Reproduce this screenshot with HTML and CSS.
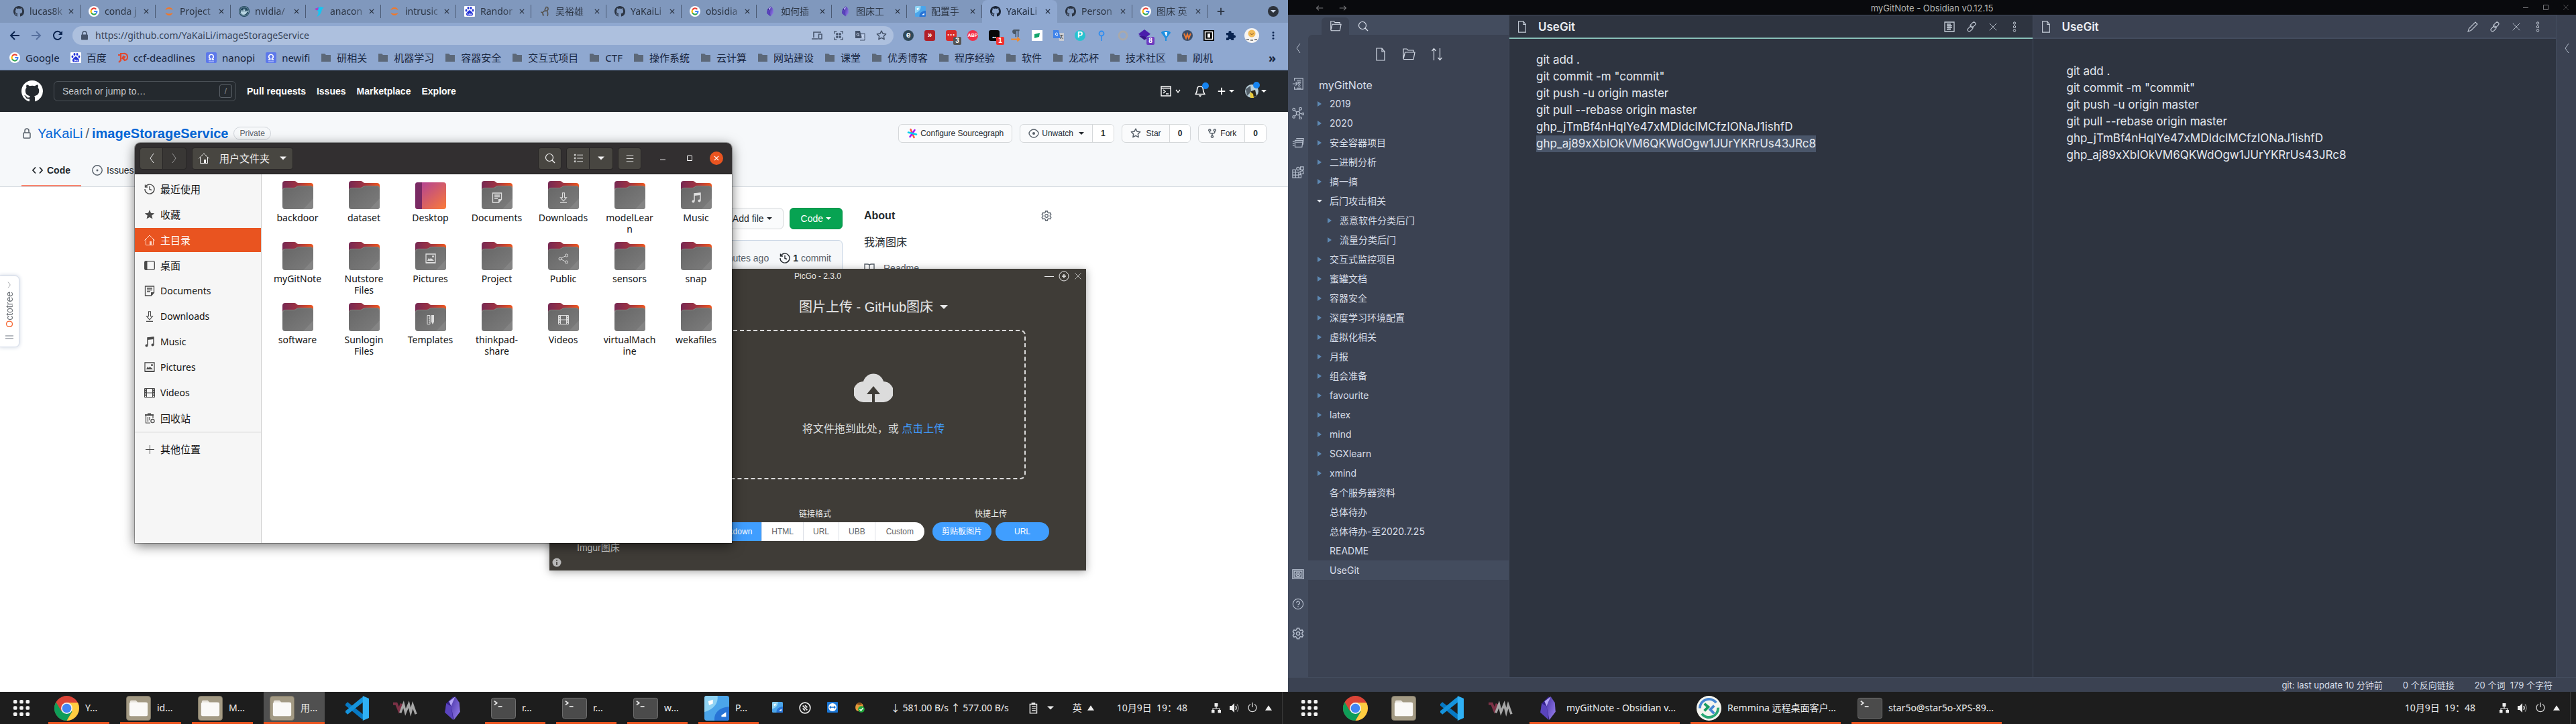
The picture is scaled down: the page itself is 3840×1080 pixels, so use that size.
FILE: index.html
```
<!DOCTYPE html>
<html lang="zh-CN">
<head>
<meta charset="utf-8">
<title>Desktop</title>
<link rel="stylesheet" href="styles.css">
</head>
<body>
<svg class="sprite" aria-hidden="true">
<defs>
<linearGradient id="gBack" x1="0" x2="1"><stop offset="0" stop-color="#772953"/><stop offset=".45" stop-color="#9b3344"/><stop offset="1" stop-color="#f0571f"/></linearGradient>
<linearGradient id="gFront" x1="0" y1="0" x2="1" y2="1"><stop offset="0" stop-color="#666"/><stop offset="1" stop-color="#7d7d7d"/></linearGradient>
<linearGradient id="gDesk" x1="0" x2="1" y2="1"><stop offset="0" stop-color="#ab3d9c"/><stop offset="1" stop-color="#fb7b38"/></linearGradient>
<linearGradient id="gObs" x1="0" x2="1" y2="1"><stop offset="0" stop-color="#4a35a8"/><stop offset="1" stop-color="#9a82f0"/></linearGradient>
</defs>
<symbol id="github" viewBox="0 0 16 16"><path fill="currentColor" d="M8 0C3.58 0 0 3.58 0 8c0 3.54 2.29 6.53 5.47 7.59.4.07.55-.17.55-.38 0-.19-.01-.82-.01-1.49-2.01.37-2.53-.49-2.69-.94-.09-.23-.48-.94-.82-1.13-.28-.15-.68-.52-.01-.53.63-.01 1.08.58 1.23.82.72 1.21 1.87.87 2.33.66.07-.52.28-.87.51-1.07-1.78-.2-3.64-.89-3.64-3.95 0-.87.31-1.59.82-2.15-.08-.2-.36-1.02.08-2.12 0 0 .67-.21 2.2.82.64-.18 1.32-.27 2-.27.68 0 1.36.09 2 .27 1.53-1.04 2.2-.82 2.2-.82.44 1.1.16 1.92.08 2.12.51.56.82 1.27.82 2.15 0 3.07-1.87 3.75-3.65 3.95.29.25.54.73.54 1.48 0 1.07-.01 1.93-.01 2.2 0 .21.15.46.55.38A8.013 8.013 0 0016 8c0-4.42-3.58-8-8-8z"/></symbol>
<symbol id="google" viewBox="0 0 16 16"><circle cx="8" cy="8" r="8" fill="#fff"/><g fill="none" stroke-width="2.2"><path d="M11.4 4.9A4.4 4.4 0 0 0 4.2 5.7" stroke="#ea4335"/><path d="M4.2 5.7a4.4 4.4 0 0 0 0 4.6" stroke="#fbbc05"/><path d="M4.2 10.3a4.4 4.4 0 0 0 6.8 1.1" stroke="#34a853"/><path d="M11 11.4A4.4 4.4 0 0 0 12.4 8H8.2" stroke="#4285f4"/></g></symbol>
<symbol id="jupyter" viewBox="0 0 16 16"><path fill="#f37726" d="M2.4 6.2C3.2 3.6 5.300 2 8 2s4.800 1.600 5.600 4.200C12.200 5 10.200 4.500 8 4.500S3.800 5 2.400 6.200zM2.400 9.800C3.800 11 5.800 11.500 8 11.500s4.200-.5 5.600-1.700C12.800 12.400 10.700 14 8 14s-4.800-1.600-5.600-4.200z"/></symbol>
<symbol id="docker" viewBox="0 0 16 16"><circle cx="8" cy="8" r="8" fill="#23485e"/><circle cx="8" cy="8" r="6.500" fill="none" stroke="#8fb0c0" stroke-width=".8"/><path fill="#b9d5e2" d="M2.800 8h8.200c.6 0 .9-1 .7-1.800.8.4 1 1 .9 1.500.5-.1 1 0 1.300.2-.3.700-.9 1-1.700 1C11.200 11.700 9.500 13 7 13c-2.600 0-4.300-1.700-4.200-5zM4 6h1.500v1.500H4zM6 6h1.500v1.500H6zM8 6h1.500v1.500H8zM6 4h1.500v1.500H6zM8 4h1.500v1.500H8z"/></symbol>
<symbol id="hummer" viewBox="0 0 16 16"><path fill="#18c4f0" d="M1 4l5-2c3-1.500 6-1 9 1-2 0-3 2-3.500 4C10.500 11 9 14 4 16c2-3 3-5 2.500-8z"/><path fill="#b03ec4" d="M1 4l6-2-1 4c-2 1-3 0-5-2z"/></symbol>
<symbol id="baidu" viewBox="0 0 16 16"><rect width="16" height="16" rx="1" fill="#fff"/><g fill="#2433d8"><ellipse cx="3" cy="6.500" rx="1.400" ry="2"/><ellipse cx="6" cy="3" rx="1.500" ry="2.100"/><ellipse cx="10" cy="3" rx="1.500" ry="2.100"/><ellipse cx="13" cy="6.500" rx="1.400" ry="2"/><path d="M8 6.200c1.400 0 2 1.500 3.300 2.600C13.800 11 13.400 14.600 10.600 14.600H5.400C2.600 14.600 2.200 11 4.700 8.800 6 7.700 6.600 6.200 8 6.200z"/></g><path d="M5.500 10v3h2V11M9 11v2h2v-2" stroke="#fff" fill="none" stroke-width=".8"/></symbol>
<symbol id="blogs" viewBox="0 0 16 16"><path d="M2 9c3 0 4 2 3 5M7 14c-4-3-1-8 2-6M9 2c5-2 5 4 2 5s-4-2-1-4M11 7c2 2 2 5 1 8" stroke="#55534f" stroke-width="1.600" fill="none"/></symbol>
<symbol id="obsidian" viewBox="0 0 24 36"><path fill="#34208c" d="M3 11L13 1l3 3-3 30L1 24z"/><path fill="#5a44bd" d="M3 11l7 4 3 20L1 24z"/><path fill="url(#gObs)" d="M16 1l6 9 1 13-9 12-4-20z"/><path fill="#b3a4f5" d="M16 1l-6 14-3-7z"/></symbol>
<symbol id="picgo" viewBox="0 0 32 32"><rect width="32" height="32" rx="3" fill="#4ba5ea"/><path fill="#8fd3f4" d="M3 0h14c1 9-4 17-17 21V3a3 3 0 0 1 3-3z"/><path fill="#2874d6" d="M32 14v15a3 3 0 0 1-3 3H13c-1-10 6-17 19-18z"/><path fill="#fff" d="M5 7l6-2v5l-5 2zM22 25l6-4v6h-6z"/></symbol>
<symbol id="x" viewBox="0 0 16 16"><path d="M3 3l10 10M13 3L3 13" stroke="currentColor" stroke-width="2" fill="none"/></symbol>
<symbol id="xthin" viewBox="0 0 16 16"><path d="M2 2l12 12M14 2L2 14" stroke="currentColor" fill="none"/></symbol>
<symbol id="plus" viewBox="0 0 16 16"><path d="M8 2v12M2 8h12" stroke="currentColor" stroke-width="2" fill="none"/></symbol>
<symbol id="plusthin" viewBox="0 0 16 16"><path d="M8.500 2v13M2 8.500h13" stroke="currentColor" fill="none"/></symbol>
<symbol id="back" viewBox="0 0 16 16"><path d="M15 8H2.500M8 2L2 8l6 6" stroke="currentColor" stroke-width="2" fill="none"/></symbol>
<symbol id="fwd" viewBox="0 0 16 16"><path d="M1 8h12.500M8 2l6 6-6 6" stroke="currentColor" stroke-width="2" fill="none"/></symbol>
<symbol id="backthin" viewBox="0 0 16 16"><path d="M15 8H2M6.500 3.500L2 8l4.500 4.500" stroke="currentColor" fill="none" stroke-width="1.500"/></symbol>
<symbol id="fwdthin" viewBox="0 0 16 16"><path d="M1 8h13M9.500 3.500L14 8l-4.500 4.500" stroke="currentColor" fill="none" stroke-width="1.500"/></symbol>
<symbol id="reload" viewBox="0 0 16 16"><path d="M13.300 10.500A6 6 0 1 1 12.500 4" stroke="currentColor" stroke-width="2" fill="none"/><path fill="currentColor" d="M15 1v6H9z"/></symbol>
<symbol id="lockfill" viewBox="0 0 16 16"><rect x="3" y="6.500" width="10" height="8" rx="1" fill="currentColor"/><path d="M5.200 7V4.500a2.800 2.800 0 0 1 5.600 0V7" fill="none" stroke="currentColor" stroke-width="1.600"/></symbol>
<symbol id="lock" viewBox="0 0 16 16"><rect x="3" y="7" width="10" height="8" rx="1" fill="none" stroke="currentColor" stroke-width="1.500"/><path d="M5 7V4a3 3 0 0 1 6 0v3" fill="none" stroke="currentColor" stroke-width="1.500"/></symbol>
<symbol id="devices" viewBox="0 0 16 16"><path d="M14 3H3v8M0 13h9" stroke="currentColor" stroke-width="1.600" fill="none"/><rect x="10.500" y="6" width="4.500" height="7" fill="none" stroke="currentColor" stroke-width="1.500"/></symbol>
<symbol id="qr" viewBox="0 0 16 16"><g fill="none" stroke="currentColor" stroke-width="1.500"><path d="M1 5V1h4M11 1h4v4M15 11v4h-4M5 15H1v-4"/><path d="M4 4h3v3H4zM9 4h3v3H9zM4 9h3v3H4zM9 9h3v3H9z" fill="currentColor" stroke-width=".5"/></g></symbol>
<symbol id="translate" viewBox="0 0 16 16"><path d="M7 5h8v10H8" fill="none" stroke="currentColor"/><path fill="currentColor" d="M1 1h7l3 11H1z"/><path d="M6.500 5A2 2 0 1 0 7 7H5.200M10 8h4M12 7v1c0 2-1 3-2 4M11 9l3 3.500" stroke="#cfdaf0" fill="none" stroke-width=".9"/></symbol>
<symbol id="staro" viewBox="0 0 16 16"><path fill="currentColor" d="M8 .25a.75.75 0 01.673.418l1.882 3.815 4.210.612a.75.75 0 01.416 1.279l-3.046 2.970.719 4.192a.75.75 0 01-1.088.791L8 12.347l-3.766 1.980a.75.75 0 01-1.088-.79l.72-4.194L.818 6.374a.75.75 0 01.416-1.280l4.210-.611L7.327.668A.75.75 0 018 .25zm0 2.445L6.615 5.500a.75.75 0 01-.564.41l-3.097.45 2.240 2.184a.75.75 0 01.216.664l-.528 3.084 2.769-1.456a.75.75 0 01.698 0l2.770 1.456-.53-3.084a.75.75 0 01.216-.664l2.240-2.183-3.096-.45a.75.75 0 01-.564-.41L8 2.694v.001z"/></symbol>
<symbol id="starf" viewBox="0 0 16 16"><path fill="currentColor" d="M8 1l2 4.800 5.200.4-4 3.400 1.300 5L8 11.900l-4.500 2.700 1.300-5-4-3.400L6 5.800z"/></symbol>
<symbol id="fork" viewBox="0 0 16 16"><path fill="currentColor" fill-rule="evenodd" d="M5 3.250a.75.75 0 11-1.500 0 .75.75 0 011.500 0zm0 2.122a2.250 2.250 0 10-1.500 0v.878A2.250 2.250 0 005.750 8.500h1.500v2.128a2.251 2.251 0 101.500 0V8.500h1.500a2.250 2.250 0 002.250-2.250v-.878a2.250 2.250 0 10-1.500 0v.878a.75.75 0 01-.75.75h-4.500A.75.75 0 015 6.250v-.878zm3.750 7.378a.75.75 0 11-1.500 0 .75.75 0 011.500 0zm3-8.750a.75.75 0 100-1.500.75.75 0 000 1.500z"/></symbol>
<symbol id="folderbm" viewBox="0 0 16 16"><path fill="#5c6878" d="M1 2h5l2 2h7v10H1z"/></symbol>
<symbol id="ccf" viewBox="0 0 16 16"><path d="M1 4h4v8l-3 3M4 2h5a5 5 0 0 1 2 10l-2-2 2-3-2-1-2 4" fill="none" stroke="#e0492f" stroke-width="2.200"/></symbol>
<symbol id="omega" viewBox="0 0 16 16"><rect width="16" height="16" rx="2" fill="#5d78ea"/><path d="M4 11h2.500V9.500a3.300 3.300 0 1 1 3 0V11H12" fill="none" stroke="#fff" stroke-width="1.700"/><path d="M4 14h8" stroke="#c9d3ff" stroke-width="1"/></symbol>
<symbol id="puzzle" viewBox="0 0 16 16"><path fill="currentColor" d="M2 4h3.500a2.200 2.200 0 1 1 4 0H13v3.500a2.200 2.200 0 1 1 0 4V15H9.500a2 2 0 1 0-4 0H2v-4a2 2 0 1 0 0-3.500z"/></symbol>
<symbol id="dots" viewBox="0 0 16 16"><g fill="currentColor"><circle cx="8" cy="3" r="1.700"/><circle cx="8" cy="8" r="1.700"/><circle cx="8" cy="13" r="1.700"/></g></symbol>
<symbol id="odots" viewBox="0 0 16 16"><g fill="none" stroke="currentColor"><circle cx="8" cy="2.500" r="1.700"/><circle cx="8" cy="8" r="1.700"/><circle cx="8" cy="13.500" r="1.700"/></g></symbol>
<symbol id="caret" viewBox="0 0 8 8"><path fill="currentColor" d="M0 2h8L4 6z"/></symbol>
<symbol id="caretup" viewBox="0 0 8 8"><path fill="currentColor" d="M0 7h8L4 1z"/></symbol>
<symbol id="caretright" viewBox="0 0 8 8"><path fill="currentColor" d="M1 0l6 4-6 4z"/></symbol>
<symbol id="chevl" viewBox="0 0 8 16"><path d="M7 1L2 8l5 7" stroke="currentColor" fill="none"/></symbol>
<symbol id="chevr" viewBox="0 0 8 16"><path d="M1 1l5 7-5 7" stroke="currentColor" fill="none"/></symbol>
<symbol id="chevd" viewBox="0 0 8 8"><path d="M1 2l3 4 3-4" stroke="currentColor" fill="none" stroke-width="1.300"/></symbol>
<symbol id="term" viewBox="0 0 16 16"><path fill="none" stroke="currentColor" stroke-width="1.400" d="M1 1h14v14H1zM1 3.500h14M4 6l3 2.500L4 11M8 12h4"/></symbol>
<symbol id="bell" viewBox="0 0 16 16"><path fill="none" stroke="currentColor" stroke-width="1.400" d="M8 1.500C5 1.500 4 4 4 6c0 3-1 4-2 6h12c-1-2-2-3-2-6 0-2-1-4.500-4-4.500z"/><path d="M6 13.500h4L8 15.800z" fill="currentColor"/></symbol>
<symbol id="code" viewBox="0 0 16 16"><path fill="none" stroke="currentColor" stroke-width="1.700" d="M5 3.500L1 8l4 4.500M11 3.500L15 8l-4 4.500"/></symbol>
<symbol id="issue" viewBox="0 0 16 16"><circle cx="8" cy="8" r="7.200" fill="none" stroke="currentColor" stroke-width="1.400"/><circle cx="8" cy="8" r="1.500" fill="currentColor"/></symbol>
<symbol id="eye" viewBox="0 0 16 16"><path fill="none" stroke="currentColor" stroke-width="1.400" d="M8 2c3.500 0 7 3.500 7 6s-3.500 6-7 6-7-3.500-7-6 3.500-6 7-6z"/><circle cx="8" cy="8" r="2" fill="currentColor"/></symbol>
<symbol id="sg" viewBox="0 0 16 16"><g stroke-width="2.600" stroke-linecap="round"><path d="M5.500 2l5 12" stroke="#ff5543"/><path d="M11.500 3l-7 10" stroke="#a112ff"/><path d="M2 6.500l12 3" stroke="#00cbec"/></g></symbol>
<symbol id="gear" viewBox="0 0 16 16"><path fill="none" stroke="currentColor" stroke-width="1.300" d="M6.600 1h2.800l.5 2 1.500.9 2-.6 1.400 2.400L13.300 7.200v1.600l1.500 1.500-1.400 2.400-2-.6-1.500.9-.5 2H6.600l-.5-2-1.500-.9-2 .6-1.400-2.400 1.500-1.500V7.200L1.200 5.700l1.400-2.400 2 .6L6.100 3z"/><circle cx="8" cy="8" r="2.300" fill="none" stroke="currentColor" stroke-width="1.300"/></symbol>
<symbol id="history" viewBox="0 0 16 16"><path fill="none" stroke="currentColor" stroke-width="1.400" d="M2 4.500A7 7 0 1 1 1 8M1.500 1.500v3.500H5M8 4v4.500l3 1"/></symbol>
<symbol id="book" viewBox="0 0 16 16"><path fill="none" stroke="currentColor" stroke-width="1.400" d="M8 4c0-1 1-2 3-2h4v10h-4c-2 0-3 1-3 2 0-1-1-2-3-2H1V2h4c2 0 3 1 3 2zM8 4v10"/></symbol>
<symbol id="home" viewBox="0 0 16 16"><path fill="none" stroke="currentColor" d="M.5 8.500L8 1l7.500 7.500M2.500 7v8.500h11V7"/><path fill="currentColor" d="M8 10h3v5.500H8z"/></symbol>
<symbol id="desk" viewBox="0 0 16 16"><rect x=".7" y="1.700" width="14.600" height="12.600" rx="1.500" fill="none" stroke="currentColor" stroke-width="1.300"/><path fill="currentColor" d="M1 2h3.500v12H1z"/></symbol>
<symbol id="doc" viewBox="0 0 16 16"><path fill="none" stroke="currentColor" stroke-width="1.300" d="M1.500 1h13v9.500L10.500 15h-9zM4 4h8M4 6.500h8M4 9h5"/><path fill="currentColor" d="M10 10h5l-5 5z"/></symbol>
<symbol id="down" viewBox="0 0 16 16"><path fill="none" stroke="currentColor" stroke-width="1.100" d="M6.500.7h3v7h3L8 13 3.500 7.700h3zM3 15.400h10"/></symbol>
<symbol id="music" viewBox="0 0 16 16"><path fill="none" stroke="currentColor" stroke-width="1.500" d="M5 13V2l9-1v11"/><path fill="currentColor" d="M5 1.500l9-1V4L5 5z"/><circle cx="3.500" cy="13.500" r="2" fill="currentColor"/><circle cx="12.500" cy="12.500" r="2" fill="currentColor"/></symbol>
<symbol id="pic" viewBox="0 0 16 16"><path fill="none" stroke="currentColor" stroke-width="1.300" d="M1 1h14v13H1z"/><path fill="currentColor" d="M1 13h14v2H1zM3 11l2-4 2 2 1-2 3 2 2 2z"/><circle cx="11.500" cy="4.500" r="1.500" fill="currentColor"/></symbol>
<symbol id="video" viewBox="0 0 16 16"><path fill="none" stroke="currentColor" d="M.5 1.500h15v13H.5zM3.500 1.500v13M12.500 1.500v13M3.500 8h9"/><path stroke="currentColor" stroke-width="2" stroke-dasharray="1.500 1" d="M2 1.500v13M14 1.500v13"/></symbol>
<symbol id="trash" viewBox="0 0 16 16"><path fill="currentColor" d="M1 2h4V.5h5V2h4v2H1z"/><path fill="none" stroke="currentColor" stroke-width="1.200" d="M2.500 4v11H9M13 4v4M5.500 6v7M8 6v5"/><circle cx="12.500" cy="12" r="2.600" fill="none" stroke="currentColor" stroke-width="1.200"/></symbol>
<symbol id="share" viewBox="0 0 16 16"><g fill="none" stroke="currentColor"><circle cx="3" cy="8" r="2"/><circle cx="12.500" cy="3" r="2"/><circle cx="12.500" cy="13" r="2"/><path d="M5 7l5.500-3M5 9l5.500 3"/></g></symbol>
<symbol id="ruler" viewBox="0 0 16 16"><path fill="none" stroke="currentColor" d="M3 1.500h4v13H3zM5 4h2M5 6.500h2M5 9h2M5 11.500h2"/><path fill="currentColor" d="M9 1h4v10l-2 4-2-4z"/></symbol>
<symbol id="search" viewBox="0 0 16 16"><circle cx="7" cy="7" r="5.500" fill="none" stroke="currentColor" stroke-width="1.200"/><path d="M11 11l4 4" stroke="currentColor" stroke-width="1.500"/></symbol>
<symbol id="list" viewBox="0 0 16 16"><path stroke="currentColor" fill="none" d="M1.500 1.500h2v2h-2zM1.500 7h2v2h-2zM1.500 12.500h2v2h-2zM6 2.500h10M6 8h10M6 13.500h10"/></symbol>
<symbol id="menu" viewBox="0 0 16 16"><path stroke="currentColor" fill="none" d="M2 3.500h12M2 8.500h12M2 13.500h12"/></symbol>
<symbol id="folder" viewBox="0 0 46 42"><path fill="url(#gBack)" d="M0 4a4 4 0 0 1 4-4h14c3 0 3 3 6 3h18a4 4 0 0 1 4 4v20H0z"/><path fill="url(#gFront)" d="M0 14a4 4 0 0 1 4-4h13c3 0 4-3 7-3h18a4 4 0 0 1 4 4v27a4 4 0 0 1-4 4H4a4 4 0 0 1-4-4z"/><path fill="none" stroke="#8c8580" stroke-width=".8" d="M.5 14a4 4 0 0 1 4-3.600h13c3 0 4-3 7-3h17a4 4 0 0 1 4 3.600"/><path fill="#848484" d="M46 26v12a4 4 0 0 1-4 4H31z"/></symbol>
<symbol id="desktopf" viewBox="0 0 46 42"><rect y="2" width="46" height="40" rx="4" fill="url(#gDesk)"/><path fill="#7a2a63" d="M10 2v40H4a4 4 0 0 1-4-4V6a4 4 0 0 1 4-4z"/></symbol>
<symbol id="cloud" viewBox="0 0 58 43"><path fill="#dcdcdc" d="M15 43A15 15 0 0 1 14 12 15.500 15.500 0 0 1 44 12 15.500 15.500 0 0 1 43 43H31V31h8L29 19 19 31h8v12z"/></symbol>
<symbol id="circplus" viewBox="0 0 16 16"><circle cx="8" cy="8" r="7" fill="none" stroke="currentColor"/><path d="M8 5v6M5 8h6" stroke="currentColor" stroke-width="1.500"/></symbol>
<symbol id="info" viewBox="0 0 16 16"><circle cx="8" cy="8" r="6.500" fill="#b8b8b8"/><path d="M8 7v5M8 4v1.700" stroke="#3f3c37" stroke-width="1.600"/></symbol>
<symbol id="grid" viewBox="0 0 28 28"><g fill="#f2f2f2"><rect x="1" y="1" width="6" height="6" rx="2"/><rect x="11" y="1" width="6" height="6" rx="2"/><rect x="21" y="1" width="6" height="6" rx="2"/><rect x="1" y="11" width="6" height="6" rx="2"/><rect x="11" y="11" width="6" height="6" rx="2"/><rect x="21" y="11" width="6" height="6" rx="2"/><rect x="1" y="21" width="6" height="6" rx="2"/><rect x="11" y="21" width="6" height="6" rx="2"/><rect x="21" y="21" width="6" height="6" rx="2"/></g></symbol>
<symbol id="chrome" viewBox="0 0 38 38"><circle cx="19" cy="19" r="19" fill="#db4437"/><path fill="#0f9d58" d="M2.500 9.500A19 19 0 0 0 19 38l8.500-14.500L10.500 23z"/><path fill="#ffcd40" d="M19 38A19 19 0 0 0 36 10.500H19l8.200 13.800z"/><circle cx="19" cy="19" r="8.700" fill="#f1f1f1"/><circle cx="19" cy="19" r="7" fill="#4285f4"/></symbol>
<symbol id="files" viewBox="0 0 38 38"><rect x=".5" y=".5" width="37" height="37" rx="4" fill="#a39a84" stroke="#7d7665"/><path fill="#e8e4dc" d="M6 9a2 2 0 0 1 2-2h7l3 3h12v5H6z"/><rect x="5" y="10" width="28" height="21" rx="2" fill="#faf9f7"/></symbol>
<symbol id="vscode" viewBox="0 0 36 36"><path fill="#0779c4" d="M1 12l3-3 24 19v6L24 33 1 14z"/><path fill="#1593dc" d="M1 24l3 3L28 8V1l-4 2L1 22z"/><path fill="#2fb0f4" d="M26 0l9 4v28l-9 4z"/></symbol>
<symbol id="vm" viewBox="0 0 38 18"><path d="M1 2h5l4 10 4-10" fill="none" stroke="#7c3146" stroke-width="4"/><path d="M12 16l5-13 3 12 5-12 3 12 3-11 5 14" fill="none" stroke="#a6a6a6" stroke-width="3.500"/></symbol>
<symbol id="termapp" viewBox="0 0 38 32"><rect x=".5" y=".5" width="37" height="31" rx="3" fill="#4b4b4b" stroke="#707070"/><path d="M5 5l4 3-4 3M11 13.500h6" stroke="#e8e8e8" stroke-width="1.800" fill="none"/></symbol>
<symbol id="remmina" viewBox="0 0 38 38"><circle cx="19" cy="19" r="19" fill="#f4f4ee"/><path d="M5 19a14 14 0 0 1 25-8.500" stroke="#4687d4" stroke-width="4" fill="none"/><path d="M33 18a14 14 0 0 1-25 9.500" stroke="#2aa876" stroke-width="4" fill="none"/><path d="M12 12l6 5-6 6" stroke="#169c62" stroke-width="4" fill="none"/><path d="M27 15l-6 6 6 6" stroke="#4687d4" stroke-width="4" fill="none"/></symbol>
<symbol id="spin" viewBox="0 0 16 16"><circle cx="8" cy="8" r="7" fill="none" stroke="#e8e8e8" stroke-width="1.500"/><path d="M5 5l6 6M5 8.500l3 3M8 4.500l3 3" stroke="#e8e8e8" stroke-width="1.600"/></symbol>
<symbol id="tv" viewBox="0 0 16 16"><rect width="16" height="16" rx="1" fill="#1a76d6"/><circle cx="8" cy="8" r="6" fill="#fff"/><path d="M3 8l3-2.500v1.700h4V5.500L13 8l-3 2.500V8.800H6v1.700z" fill="#1a76d6"/></symbol>
<symbol id="nut" viewBox="0 0 16 16"><path fill="#e59a3c" d="M8 1c5 1 7 4 5 9-2 4-6 5-9 3S1 2 8 1z"/><path fill="#8a4d18" d="M4 3c3-3 7-2 8 1-3 1-6 1-8-1z"/><circle cx="11" cy="11" r="4.800" fill="#22a83c"/><path d="M8.500 11l2 2 3-4" stroke="#fff" stroke-width="1.400" fill="none"/></symbol>
<symbol id="clip" viewBox="0 0 16 16"><path fill="none" stroke="#eee" stroke-width="1.300" d="M3 3h9v12H3zM5.500 6.500h5M5.500 9h5M5.500 11.500h5"/><path fill="#eee" d="M5 1h5v3H5z"/></symbol>
<symbol id="net" viewBox="0 0 16 16"><path fill="#eee" d="M5.500 1h5v5h-5zM1 11h4.500v4.500H1zM10.500 11H15v4.500h-4.500z"/><path d="M8 6v3M3 11V9h10v2" fill="none" stroke="#eee" stroke-width="1.200"/></symbol>
<symbol id="vol" viewBox="0 0 16 16"><path fill="#eee" d="M1 5h3l4-4v14l-4-4H1z"/><path d="M10 5q2 3 0 6" stroke="#eee" fill="none" stroke-width="1.500"/><path d="M12 2.500q4 5.500 0 11" stroke="#888" fill="none" stroke-width="1.300"/></symbol>
<symbol id="power" viewBox="0 0 16 16"><path d="M8 0v7M5 2.500a6 6 0 1 0 6 0" stroke="#ddd" fill="none" stroke-width="1.300"/></symbol>
<symbol id="ofolder" viewBox="0 0 20 20"><path fill="none" stroke="currentColor" stroke-width="1.200" d="M2 17V2h5l2 2h8v3M2 17L4.500 7H19l-2 10.500H2"/></symbol>
<symbol id="ofile" viewBox="0 0 20 20"><path fill="none" stroke="currentColor" stroke-width="1.200" d="M4 1h8l4 5v13H4zM12 1v5h4"/></symbol>
<symbol id="osort" viewBox="0 0 20 20"><path fill="none" stroke="currentColor" stroke-width="1.200" d="M5.500 19V2M2.500 5l3-3.500 3 3.500M14.500 1v17M11.500 15l3 3.500 3-3.500"/></symbol>
<symbol id="olink" viewBox="0 0 16 16"><g fill="none" stroke="currentColor" stroke-width="1.100"><rect x="7.500" y="0.500" width="5" height="9" rx="2.500" transform="rotate(45 10 5)"/><rect x="3.500" y="6.500" width="5" height="9" rx="2.500" transform="rotate(45 6 11)"/></g></symbol>
<symbol id="oread" viewBox="0 0 16 16"><path fill="none" stroke="currentColor" stroke-width="1.300" d="M1 1h14v14H1zM4 4h6M4 6.500h8M4 9h8M4 12h6"/><path fill="currentColor" opacity=".5" d="M5 5h5v6H5z"/></symbol>
<symbol id="pencil" viewBox="0 0 16 16"><path fill="none" stroke="currentColor" stroke-width="1.100" d="M1 15l1.500-4.500L12 1l3 3-9.500 9.500z"/></symbol>
<symbol id="oswitch" viewBox="0 0 20 20"><path fill="none" stroke="currentColor" stroke-width="1.300" d="M4 5V1h14v18H4v-4M8 4h7M8 7h7M8 17h7M1 10h8M6 7l3 3-3 3"/><circle cx="12" cy="9" r="1.500" fill="none" stroke="currentColor"/><circle cx="12" cy="13" r="1.500" fill="none" stroke="currentColor"/></symbol>
<symbol id="ograph" viewBox="0 0 20 20"><g fill="none" stroke="currentColor" stroke-width="1.300"><circle cx="10" cy="10" r="3"/><circle cx="3" cy="3.500" r="2"/><circle cx="14" cy="2.500" r="2"/><circle cx="18" cy="11" r="1.700"/><circle cx="14" cy="18" r="1.800"/><circle cx="3" cy="16" r="2"/><path d="M4.500 5l3.300 3M13.200 4.300L11.300 7M13 10.300l3.300.5M11.500 12.700l1.700 3.500M7.700 12L4.500 14.700"/></g></symbol>
<symbol id="ocards" viewBox="0 0 20 20"><g fill="none" stroke="currentColor" stroke-width="1.300"><path d="M7 3h12l-1 10M5 6h13l-1.500 11H5zM6 9h11M1 8h3M1 11h3M1 14h3"/></g></symbol>
<symbol id="oblocks" viewBox="0 0 20 20"><g fill="none" stroke="currentColor" stroke-width="1.300"><path d="M1 6h5v13H1zM6 10h5v9H6zM11 14h4v5h-4zM1 10h5M1 14.500h10M14 1h5v5h-5zM13 9l5-2 1 5-5 1z"/><circle cx="10" cy="4" r="2.500"/></g></symbol>
<symbol id="ovault" viewBox="0 0 20 20"><g fill="none" stroke="currentColor" stroke-width="1.500"><rect x="1" y="2" width="18" height="15"/><rect x="3.500" y="4.500" width="13" height="10"/><circle cx="10" cy="9.500" r="3.500"/><circle cx="10" cy="9.500" r="1"/></g></symbol>
<symbol id="ohelp" viewBox="0 0 20 20"><circle cx="10" cy="10" r="8.500" fill="none" stroke="currentColor" stroke-width="1.300"/><path d="M7.500 8a2.500 2.500 0 1 1 3.500 2.300c-.8.400-1 .8-1 1.700M10 13.500v1.500" fill="none" stroke="currentColor" stroke-width="1.500"/></symbol>
</svg>

<div class="desktop">
<section class="monitor">
  <div class="browser">
    <div class="tabstrip">
      <div class="tab"><svg class="i16"><use href="#github"/></svg><span>lucas8k</span><button aria-label="Close"><svg class="i10"><use href="#x"/></svg></button></div>
      <div class="tab"><svg class="i16"><use href="#google"/></svg><span>conda j</span><button aria-label="Close"><svg class="i10"><use href="#x"/></svg></button></div>
      <div class="tab"><svg class="i16"><use href="#jupyter"/></svg><span>Project</span><button aria-label="Close"><svg class="i10"><use href="#x"/></svg></button></div>
      <div class="tab"><svg class="i16"><use href="#docker"/></svg><span>nvidia/</span><button aria-label="Close"><svg class="i10"><use href="#x"/></svg></button></div>
      <div class="tab"><svg class="i16"><use href="#hummer"/></svg><span>anacon</span><button aria-label="Close"><svg class="i10"><use href="#x"/></svg></button></div>
      <div class="tab"><svg class="i16"><use href="#jupyter"/></svg><span>intrusic</span><button aria-label="Close"><svg class="i10"><use href="#x"/></svg></button></div>
      <div class="tab"><svg class="i16"><use href="#baidu"/></svg><span>Randor</span><button aria-label="Close"><svg class="i10"><use href="#x"/></svg></button></div>
      <div class="tab"><svg class="i16"><use href="#blogs"/></svg><span>吴裕雄</span><button aria-label="Close"><svg class="i10"><use href="#x"/></svg></button></div>
      <div class="tab"><svg class="i16"><use href="#github"/></svg><span>YaKaiLi</span><button aria-label="Close"><svg class="i10"><use href="#x"/></svg></button></div>
      <div class="tab"><svg class="i16"><use href="#google"/></svg><span>obsidia</span><button aria-label="Close"><svg class="i10"><use href="#x"/></svg></button></div>
      <div class="tab"><svg class="i16"><use href="#obsidian"/></svg><span>如何插</span><button aria-label="Close"><svg class="i10"><use href="#x"/></svg></button></div>
      <div class="tab"><svg class="i16"><use href="#obsidian"/></svg><span>图床工</span><button aria-label="Close"><svg class="i10"><use href="#x"/></svg></button></div>
      <div class="tab"><svg class="i16"><use href="#picgo"/></svg><span>配置手</span><button aria-label="Close"><svg class="i10"><use href="#x"/></svg></button></div>
      <div class="tab on"><svg class="i16"><use href="#github"/></svg><span>YaKaiLi</span><button aria-label="Close"><svg class="i10"><use href="#x"/></svg></button></div>
      <div class="tab"><svg class="i16"><use href="#github"/></svg><span>Person</span><button aria-label="Close"><svg class="i10"><use href="#x"/></svg></button></div>
      <div class="tab"><svg class="i16"><use href="#google"/></svg><span>图床 英</span><button aria-label="Close"><svg class="i10"><use href="#x"/></svg></button></div>
      <button class="newtab" aria-label="New tab"><svg class="i14"><use href="#plus"/></svg></button>
      <button class="tabmenu" aria-label="Search tabs"><svg class="i8"><use href="#caret"/></svg></button>
    </div>
    <div class="toolbar">
      <button class="cell" aria-label="Back"><svg class="i16"><use href="#back"/></svg></button>
      <button class="cell dim" aria-label="Forward"><svg class="i16"><use href="#fwd"/></svg></button>
      <button class="cell" aria-label="Reload"><svg class="i16"><use href="#reload"/></svg></button>
      <div class="omnibox"><svg class="i16"><use href="#lockfill"/></svg><input aria-label="Address" value="https://github.com/YaKaiLi/imageStorageService">
        <button class="cell" aria-label="Send"><svg class="i16"><use href="#devices"/></svg></button><button class="cell" aria-label="QR"><svg class="i14"><use href="#qr"/></svg></button><button class="cell" aria-label="Translate"><svg class="i16"><use href="#translate"/></svg></button><button class="cell" aria-label="Bookmark"><svg class="i16"><use href="#staro"/></svg></button></div>
      <button class="cell" aria-label="Extension"><span class="ext round slate">e</span></button>
      <button class="cell" aria-label="Extension"><span class="ext red">»</span></button>
      <button class="cell" aria-label="Extension"><span class="ext redd">···</span><b class="badge grey">3</b></button>
      <button class="cell" aria-label="Extension"><span class="ext round abp">ABP</span></button>
      <button class="cell" aria-label="Extension"><span class="ext blk">••</span><b class="badge redb">1</b></button>
      <button class="cell" aria-label="Extension"><svg class="i18" viewBox="0 0 16 16"><path fill="#4a5866" d="M6 0h7v2h-1v8h-1.500V2H9v8H7.500V6A3 3 0 0 1 6 0z"/><path d="M2 13h11M10 10.500l3 2.500-3 2.500" stroke="#f08a2c" stroke-width="1.800" fill="none"/></svg></button>
      <button class="cell" aria-label="Extension"><svg class="i16" viewBox="0 0 16 16"><path fill="#fff" d="M0 0h16v16H0z"/><path fill="#12a46c" d="M4 6l8-2-1 6-7 2z"/></svg></button>
      <button class="cell" aria-label="Extension"><svg class="i16" viewBox="0 0 16 16"><path fill="#c8cbd2" d="M7 4h9v12H9z"/><path fill="#3f83ea" d="M0 0h8l3 12H0z"/><path d="M7 5A2 2 0 1 0 7 7H5.500" stroke="#fff" fill="none"/><path d="M10 8h5M12.500 7v2l-2 4M11 10l4 3" stroke="#555" fill="none"/></svg></button>
      <button class="cell" aria-label="Extension"><span class="ext round teal">P</span></button>
      <button class="cell" aria-label="Extension"><svg class="i16" viewBox="0 0 16 16"><circle cx="8" cy="5" r="3.500" fill="none" stroke="#2f8df0" stroke-width="1.800"/><path d="M8 8v8" stroke="#2f8df0" stroke-width="1.600"/></svg></button>
      <button class="cell" aria-label="Extension"><svg class="i16" viewBox="0 0 16 16"><circle cx="8" cy="8" r="6" fill="none" stroke="#a9a9ab" stroke-width="3"/></svg></button>
      <button class="cell" aria-label="Extension"><svg class="i18" viewBox="0 0 16 16"><path fill="#4a1dab" d="M8 0l8 6-8 6-8-6z"/><path fill="#391487" d="M0 8l8 6 4-3-4-2z"/></svg><b class="badge purple">8</b></button>
      <button class="cell" aria-label="Extension"><svg class="i16" viewBox="0 0 16 16"><path fill="#1e8fe0" d="M8 1c4 0 7 1 7 3l-6 8v4H7v-4L1 4c0-2 3-3 7-3z"/><path fill="#fff" d="M6 3h4l-1 6H8z"/></svg></button>
      <button class="cell" aria-label="Extension"><svg class="i16" viewBox="0 0 16 16"><circle cx="8" cy="8" r="8" fill="#3b4d68"/><path d="M3 5l3 7 2-6 2 6 3-7" stroke="#f07a32" stroke-width="2" fill="none"/></svg></button>
      <button class="cell" aria-label="Extension"><svg class="i16" viewBox="0 0 16 16"><path fill="#000" d="M0 0h16v16H0z"/><path fill="none" stroke="#fff" stroke-width="1.500" d="M2.500 2.500h11v11h-11z"/><path fill="#fff" d="M6 5h4v6H6z"/></svg></button>
      <button class="cell" aria-label="Extensions"><svg class="i16"><use href="#puzzle"/></svg></button>
      <button class="cell" aria-label="Profile"><svg class="i22" viewBox="0 0 22 22"><circle cx="11" cy="11" r="11" fill="#f6f4f2"/><circle cx="11" cy="8" r="5.500" fill="#f2bb59"/><path d="M8 8q3 3 6 0" stroke="#8c5a28" fill="none"/><path d="M3 17h4M9 18h4M15 17h4" stroke="#888" stroke-width="2"/></svg></button>
      <button class="cell" aria-label="Menu"><svg class="i14"><use href="#dots"/></svg></button>
    </div>
    <nav class="bookmarks">
      <a href="#"><svg class="i16"><use href="#google"/></svg>Google</a>
      <a href="#"><svg class="i16"><use href="#baidu"/></svg>百度</a>
      <a href="#"><svg class="i16"><use href="#ccf"/></svg>ccf-deadlines</a>
      <a href="#"><svg class="i16"><use href="#omega"/></svg>nanopi</a>
      <a href="#"><svg class="i16"><use href="#omega"/></svg>newifi</a>
      <a href="#"><svg class="i16"><use href="#folderbm"/></svg>研相关</a>
      <a href="#"><svg class="i16"><use href="#folderbm"/></svg>机器学习</a>
      <a href="#"><svg class="i16"><use href="#folderbm"/></svg>容器安全</a>
      <a href="#"><svg class="i16"><use href="#folderbm"/></svg>交互式项目</a>
      <a href="#"><svg class="i16"><use href="#folderbm"/></svg>CTF</a>
      <a href="#"><svg class="i16"><use href="#folderbm"/></svg>操作系统</a>
      <a href="#"><svg class="i16"><use href="#folderbm"/></svg>云计算</a>
      <a href="#"><svg class="i16"><use href="#folderbm"/></svg>网站建设</a>
      <a href="#"><svg class="i16"><use href="#folderbm"/></svg>课堂</a>
      <a href="#"><svg class="i16"><use href="#folderbm"/></svg>优秀博客</a>
      <a href="#"><svg class="i16"><use href="#folderbm"/></svg>程序经验</a>
      <a href="#"><svg class="i16"><use href="#folderbm"/></svg>软件</a>
      <a href="#"><svg class="i16"><use href="#folderbm"/></svg>龙芯杯</a>
      <a href="#"><svg class="i16"><use href="#folderbm"/></svg>技术社区</a>
      <a href="#"><svg class="i16"><use href="#folderbm"/></svg>刷机</a>
      <button class="more">»</button>
    </nav>
    <div class="gh">
      <header class="ghbar">
        <svg class="i32"><use href="#github"/></svg>
        <label class="ghsearch"><input aria-label="Search" placeholder="Search or jump to…"><kbd>/</kbd></label>
        <a href="#">Pull requests</a><a href="#">Issues</a><a href="#">Marketplace</a><a href="#">Explore</a>
        <div class="ghright">
          <button class="termbtn" aria-label="Terminal"><svg class="i16"><use href="#term"/></svg><svg class="i8"><use href="#chevd"/></svg></button>
          <button class="dot" aria-label="Notifications"><svg class="i18"><use href="#bell"/></svg></button>
          <button aria-label="New"><svg class="i14"><use href="#plus"/></svg><svg class="i8"><use href="#caret"/></svg></button>
          <button class="dot" aria-label="Account"><svg class="i20" viewBox="0 0 20 20"><circle cx="10" cy="10" r="10" fill="#b9cfd9"/><path fill="#54606a" d="M1 7l7-5 1 9-6 6z"/><path fill="#2a261c" d="M9 10l6-2 2 9-7 3z"/><path fill="#e8c93a" d="M7 11l5 3 1 6H8z"/></svg><svg class="i8"><use href="#caret"/></svg></button>
        </div>
      </header>
      <div class="repohead">
        <div class="reporow">
          <svg class="i16 mut"><use href="#lock"/></svg>
          <h1><a href="#">YaKaiLi</a><i>/</i><a href="#"><b>imageStorageService</b></a></h1>
          <span class="pill">Private</span>
          <div class="ghbtns">
            <button class="gbtn"><svg class="i16"><use href="#sg"/></svg>Configure Sourcegraph</button>
            <div class="grp"><button><svg class="i16 mut"><use href="#eye"/></svg>Unwatch <svg class="i8 gapl"><use href="#caret"/></svg></button><a href="#">1</a></div>
            <div class="grp"><button><svg class="i16 mut"><use href="#staro"/></svg><span class="gapl">Star</span></button><a href="#">0</a></div>
            <div class="grp"><button><svg class="i16 mut"><use href="#fork"/></svg>Fork</button><a href="#">0</a></div>
          </div>
        </div>
        <nav class="repotabs"><a href="#" class="on"><svg class="i16"><use href="#code"/></svg>Code</a><a href="#"><svg class="i16 mut"><use href="#issue"/></svg>Issues</a></nav>
      </div>
      <div class="repobody">
        <div class="repomain">
          <div class="acts"><button class="addfile">Add file <svg class="i8"><use href="#caret"/></svg></button><button class="green">Code <svg class="i8"><use href="#caret"/></svg></button></div>
          <div class="commit"><span>minutes ago</span><svg class="i16 ink"><use href="#history"/></svg><span><b>1</b> commit</span></div>
        </div>
        <aside class="about">
          <div class="abouthead"><h2>About</h2><svg class="i16 mut"><use href="#gear"/></svg></div>
          <p>我滴图床</p>
          <a href="#"><svg class="i16"><use href="#book"/></svg>Readme</a>
        </aside>
      </div>
    </div>
  </div>

  <div class="octotree"><svg class="i8t"><use href="#chevr"/></svg><span><b>O</b>ctotree</span><i></i></div>

  <section class="picgo">
    <header><span>PicGo - 2.3.0</span><div class="pgctl"><button aria-label="Minimize"><svg class="i14" viewBox="0 0 14 14"><path d="M0 7.500h14" stroke="currentColor"/></svg></button><button aria-label="Pin"><svg class="i16"><use href="#circplus"/></svg></button><button aria-label="Close"><svg class="i12"><use href="#xthin"/></svg></button></div></header>
    <div class="pgbody">
      <aside><span>Imgur图床</span><svg class="i16"><use href="#info"/></svg></aside>
      <main>
        <h2>图片上传 - GitHub图床 <svg class="i12"><use href="#caret"/></svg></h2>
        <div class="drop"><svg class="cloud"><use href="#cloud"/></svg><p>将文件拖到此处，或 <a href="#">点击上传</a></p></div>
        <div class="pgrow">
          <div class="fmt"><span>链接格式</span><div class="seg"><button class="on">Markdown</button><button>HTML</button><button>URL</button><button>UBB</button><button>Custom</button></div></div>
          <div class="quick"><span>快捷上传</span><div class="qb"><button>剪贴板图片</button><button>URL</button></div></div>
        </div>
      </main>
    </div>
  </section>

  <section class="nautilus">
    <header>
      <div class="joined"><button aria-label="Back"><svg class="i8t"><use href="#chevl"/></svg></button><button class="off" aria-label="Forward"><svg class="i8t"><use href="#chevr"/></svg></button></div>
      <button class="path"><svg class="i16"><use href="#home"/></svg><span>用户文件夹</span><svg class="i10"><use href="#caret"/></svg></button>
      <div class="nright">
        <button class="hb" aria-label="Search"><svg class="i16"><use href="#search"/></svg></button>
        <div class="joined"><button aria-label="View"><svg class="i14"><use href="#list"/></svg></button><button aria-label="View options"><svg class="i10"><use href="#caret"/></svg></button></div>
        <button class="hb" aria-label="Menu"><svg class="i14"><use href="#menu"/></svg></button>
      </div>
      <div class="wctl"><button aria-label="Minimize"><svg class="i12" viewBox="0 0 12 12"><path d="M2 8.500h8" stroke="#fff"/></svg></button><button aria-label="Maximize"><svg class="i12" viewBox="0 0 12 12"><path d="M2.500 2.500h7v7h-7z" stroke="#fff" fill="none"/></svg></button><button class="close" aria-label="Close"><svg class="i10"><use href="#x"/></svg></button></div>
    </header>
    <div class="nbody">
      <nav class="places">
        <a href="#"><svg class="i16"><use href="#history"/></svg>最近使用</a>
        <a href="#"><svg class="i16"><use href="#starf"/></svg>收藏</a>
        <a href="#" class="on"><svg class="i16"><use href="#home"/></svg>主目录</a>
        <a href="#"><svg class="i16"><use href="#desk"/></svg>桌面</a>
        <a href="#" class="latin"><svg class="i16"><use href="#doc"/></svg>Documents</a>
        <a href="#" class="latin"><svg class="i16"><use href="#down"/></svg>Downloads</a>
        <a href="#" class="latin"><svg class="i16"><use href="#music"/></svg>Music</a>
        <a href="#" class="latin"><svg class="i16"><use href="#pic"/></svg>Pictures</a>
        <a href="#" class="latin"><svg class="i16"><use href="#video"/></svg>Videos</a>
        <a href="#"><svg class="i16"><use href="#trash"/></svg>回收站</a>
        <hr>
        <a href="#"><svg class="i16"><use href="#plusthin"/></svg>其他位置</a>
      </nav>
      <div class="fgrid">
        <a href="#"><span class="fi"><svg><use href="#folder"/></svg></span>backdoor</a>
        <a href="#"><span class="fi"><svg><use href="#folder"/></svg></span>dataset</a>
        <a href="#"><span class="fi"><svg><use href="#desktopf"/></svg></span>Desktop</a>
        <a href="#"><span class="fi"><svg><use href="#folder"/></svg><svg class="em"><use href="#doc"/></svg></span>Documents</a>
        <a href="#"><span class="fi"><svg><use href="#folder"/></svg><svg class="em"><use href="#down"/></svg></span>Downloads</a>
        <a href="#"><span class="fi"><svg><use href="#folder"/></svg></span>modelLear<br>n</a>
        <a href="#"><span class="fi"><svg><use href="#folder"/></svg><svg class="em"><use href="#music"/></svg></span>Music</a>
        <a href="#"><span class="fi"><svg><use href="#folder"/></svg></span>myGitNote</a>
        <a href="#"><span class="fi"><svg><use href="#folder"/></svg></span>Nutstore<br>Files</a>
        <a href="#"><span class="fi"><svg><use href="#folder"/></svg><svg class="em"><use href="#pic"/></svg></span>Pictures</a>
        <a href="#"><span class="fi"><svg><use href="#folder"/></svg></span>Project</a>
        <a href="#"><span class="fi"><svg><use href="#folder"/></svg><svg class="em"><use href="#share"/></svg></span>Public</a>
        <a href="#"><span class="fi"><svg><use href="#folder"/></svg></span>sensors</a>
        <a href="#"><span class="fi"><svg><use href="#folder"/></svg></span>snap</a>
        <a href="#"><span class="fi"><svg><use href="#folder"/></svg></span>software</a>
        <a href="#"><span class="fi"><svg><use href="#folder"/></svg></span>Sunlogin<br>Files</a>
        <a href="#"><span class="fi"><svg><use href="#folder"/></svg><svg class="em"><use href="#ruler"/></svg></span>Templates</a>
        <a href="#"><span class="fi"><svg><use href="#folder"/></svg></span>thinkpad-<br>share</a>
        <a href="#"><span class="fi"><svg><use href="#folder"/></svg><svg class="em"><use href="#video"/></svg></span>Videos</a>
        <a href="#"><span class="fi"><svg><use href="#folder"/></svg></span>virtualMach<br>ine</a>
        <a href="#"><span class="fi"><svg><use href="#folder"/></svg></span>wekafiles</a>
      </div>
    </div>
  </section>

  <footer class="taskbar">
    <button class="grid" aria-label="Apps"><svg class="i26"><use href="#grid"/></svg></button>
    <button class="task"><svg class="app"><use href="#chrome"/></svg>Y...</button>
    <button class="task"><svg class="app"><use href="#files"/></svg>id...</button>
    <button class="task"><svg class="app"><use href="#files"/></svg>M...</button>
    <button class="task on"><svg class="app"><use href="#files"/></svg>用...</button>
    <div class="pins"><button aria-label="Code"><svg class="app"><use href="#vscode"/></svg></button><button aria-label="VM"><svg class="app"><use href="#vm"/></svg></button><button aria-label="Obsidian"><svg class="app"><use href="#obsidian"/></svg></button></div>
    <button class="task t"><svg class="app"><use href="#termapp"/></svg>r...</button>
    <button class="task t"><svg class="app"><use href="#termapp"/></svg>r...</button>
    <button class="task t"><svg class="app"><use href="#termapp"/></svg>w...</button>
    <button class="task t"><svg class="app"><use href="#picgo"/></svg>P...</button>
    <div class="tray">
      <div class="trayicons"><svg class="i16"><use href="#picgo"/></svg><svg class="i18"><use href="#spin"/></svg><svg class="i16"><use href="#tv"/></svg><svg class="i16"><use href="#nut"/></svg></div>
      <span class="speed">↓ 581.00 B/s ↑ 577.00 B/s</span>
      <button class="tb" aria-label="Clipboard"><svg class="i18"><use href="#clip"/></svg><svg class="i10"><use href="#caret"/></svg></button>
      <button class="tb">英<svg class="i10"><use href="#caretup"/></svg></button>
      <time>10月9日&nbsp; 19：48</time>
      <button class="sys" aria-label="System"><svg class="i16"><use href="#net"/></svg><svg class="i16"><use href="#vol"/></svg><svg class="i16"><use href="#power"/></svg><svg class="i10"><use href="#caretup"/></svg></button>
    </div>
  </footer>
</section>

<section class="monitor">
  <div class="obs">
    <header class="otitle"><div class="onav"><svg class="i12"><use href="#backthin"/></svg><svg class="i12"><use href="#fwdthin"/></svg></div><span>myGitNote - Obsidian v0.12.15</span><div class="owin"><svg class="i10" viewBox="0 0 10 10"><path d="M1 5.500h8" stroke="currentColor"/></svg><svg class="i10" viewBox="0 0 10 10"><path d="M1.500 1.500h7v7h-7z" stroke="currentColor" fill="none"/></svg><svg class="i10"><use href="#xthin"/></svg></div></header>
    <div class="omain">
      <nav class="ribbon">
        <svg class="i8t chev"><use href="#chevl"/></svg>
        <svg class="i18"><use href="#oswitch"/></svg><svg class="i18"><use href="#ograph"/></svg><svg class="i18"><use href="#ocards"/></svg><svg class="i18"><use href="#oblocks"/></svg>
        <div class="rbot"><svg class="i18"><use href="#ovault"/></svg><svg class="i18"><use href="#ohelp"/></svg><svg class="i18"><use href="#gear"/></svg></div>
      </nav>
      <aside class="oside">
        <div class="otabs"><button class="on" aria-label="Files"><svg class="i18"><use href="#ofolder"/></svg></button><button aria-label="Search"><svg class="i16"><use href="#search"/></svg></button></div>
        <div class="otree">
          <div class="otools"><svg class="i20"><use href="#ofile"/></svg><svg class="i20"><use href="#ofolder"/></svg><svg class="i20"><use href="#osort"/></svg></div>
          <h3>myGitNote</h3>
          <ul>
            <li><svg class="i8"><use href="#caretright"/></svg>2019</li>
            <li><svg class="i8"><use href="#caretright"/></svg>2020</li>
            <li><svg class="i8"><use href="#caretright"/></svg>安全容器项目</li>
            <li><svg class="i8"><use href="#caretright"/></svg>二进制分析</li>
            <li><svg class="i8"><use href="#caretright"/></svg>搞一搞</li>
            <li class="open"><svg class="i8"><use href="#caret"/></svg>后门攻击相关</li>
            <li class="sub"><svg class="i8"><use href="#caretright"/></svg>恶意软件分类后门</li>
            <li class="sub"><svg class="i8"><use href="#caretright"/></svg>流量分类后门</li>
            <li><svg class="i8"><use href="#caretright"/></svg>交互式监控项目</li>
            <li><svg class="i8"><use href="#caretright"/></svg>蜜罐文档</li>
            <li><svg class="i8"><use href="#caretright"/></svg>容器安全</li>
            <li><svg class="i8"><use href="#caretright"/></svg>深度学习环境配置</li>
            <li><svg class="i8"><use href="#caretright"/></svg>虚拟化相关</li>
            <li><svg class="i8"><use href="#caretright"/></svg>月报</li>
            <li><svg class="i8"><use href="#caretright"/></svg>组会准备</li>
            <li><svg class="i8"><use href="#caretright"/></svg>favourite</li>
            <li><svg class="i8"><use href="#caretright"/></svg>latex</li>
            <li><svg class="i8"><use href="#caretright"/></svg>mind</li>
            <li><svg class="i8"><use href="#caretright"/></svg>SGXlearn</li>
            <li><svg class="i8"><use href="#caretright"/></svg>xmind</li>
            <li class="leaf">各个服务器资料</li>
            <li class="leaf">总体待办</li>
            <li class="leaf">总体待办-至2020.7.25</li>
            <li class="leaf">README</li>
            <li class="leaf sel">UseGit</li>
          </ul>
        </div>
      </aside>
      <article class="pane active">
        <header><svg class="i18"><use href="#ofile"/></svg><h2>UseGit</h2><div class="pacts"><svg class="i16"><use href="#oread"/></svg><svg class="i16"><use href="#olink"/></svg><svg class="i14"><use href="#xthin"/></svg><svg class="i16"><use href="#odots"/></svg></div></header>
        <div class="note"><p>git add .</p><p>git commit -m "commit"</p><p>git push -u origin master</p><p>git pull --rebase origin master</p><p>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</p><p><mark>ghp_aj89xXbIOkVM6QKWdOgw1JUrYKRrUs43JRc8</mark></p></div>
      </article>
      <article class="pane">
        <header><svg class="i18"><use href="#ofile"/></svg><h2>UseGit</h2><div class="pacts"><svg class="i16"><use href="#pencil"/></svg><svg class="i16"><use href="#olink"/></svg><svg class="i14"><use href="#xthin"/></svg><svg class="i16"><use href="#odots"/></svg></div></header>
        <div class="note preview"><p>git add .</p><p>git commit -m "commit"</p><p>git push -u origin master</p><p>git pull --rebase origin master</p><p>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</p><p>ghp_aj89xXbIOkVM6QKWdOgw1JUrYKRrUs43JRc8</p></div>
      </article>
      <nav class="ribbon right"><svg class="i8t chev"><use href="#chevl"/></svg></nav>
    </div>
    <div class="ostatus"><span>git: last update 10 分钟前</span><span>0 个反向链接</span><span>20 个词&nbsp; 179 个字符</span></div>
  </div>
  <footer class="taskbar two">
    <button class="grid" aria-label="Apps"><svg class="i26"><use href="#grid"/></svg></button>
    <div class="pins"><button aria-label="Chrome"><svg class="app"><use href="#chrome"/></svg></button><button aria-label="Files"><svg class="app"><use href="#files"/></svg></button><button aria-label="Code"><svg class="app"><use href="#vscode"/></svg></button><button aria-label="VM"><svg class="app"><use href="#vm"/></svg></button></div>
    <button class="task w"><svg class="app"><use href="#obsidian"/></svg>myGitNote - Obsidian v...</button>
    <button class="task w"><svg class="app"><use href="#remmina"/></svg>Remmina 远程桌面客户...</button>
    <button class="task w"><svg class="app"><use href="#termapp"/></svg>star5o@star5o-XPS-89...</button>
    <div class="tray">
      <time>10月9日&nbsp; 19：48</time>
      <button class="sys" aria-label="System"><svg class="i16"><use href="#net"/></svg><svg class="i16"><use href="#vol"/></svg><svg class="i16"><use href="#power"/></svg><svg class="i10"><use href="#caretup"/></svg></button>
    </div>
  </footer>
</section>
</div>
</body>
</html>
```
FILE: styles.css
```
* { box-sizing: border-box; }
body { margin: 0; font: 14px/20px "Noto Sans", "Noto Sans CJK SC", sans-serif; }
button, input { font: inherit; color: inherit; background: none; border: 0; padding: 0; margin: 0; outline: 0; }
button { display: flex; align-items: center; justify-content: center; white-space: nowrap; }
a { color: inherit; text-decoration: none; }
h1, h2, h3, p, ul { margin: 0; padding: 0; font-weight: normal; }
svg { display: block; flex: none; overflow: visible; }
.sprite { position: absolute; width: 0; height: 0; }
.i8 { width: 8px; height: 8px; }
.i8t { width: 8px; height: 16px; }
.i10 { width: 10px; height: 10px; }
.i12 { width: 12px; height: 12px; }
.i14 { width: 14px; height: 14px; }
.i16 { width: 16px; height: 16px; }
.i18 { width: 18px; height: 18px; }
.i20 { width: 20px; height: 20px; }
.i22 { width: 22px; height: 22px; }
.i26 { width: 26px; height: 26px; }
.i32 { width: 32px; height: 32px; }
.mut { color: #57606a; }
.ink { color: #24292e; }

.desktop { display: flex; min-height: 100vh; background: #1d1d1d; }
.monitor { flex: 1 1 0; min-width: 0; display: flex; flex-direction: column; position: relative; }

/* browser */
.browser { flex: 1; display: flex; flex-direction: column; background: #fff; }
.tabstrip { display: flex; height: 34px; padding-left: 8px; background: #8098bd; color: #2b3442; }
.tab { display: flex; align-items: center; width: 112px; padding: 0 9px 0 12px; position: relative; }
.tab::after { content: ""; position: absolute; right: 0; top: 7px; height: 20px; width: 1px; background: #4b5a73; }
.tab span { flex: 1; margin-left: 8px; white-space: nowrap; font-size: 14px; -webkit-mask-image: linear-gradient(90deg, #000 60%, transparent 105%); mask-image: linear-gradient(90deg, #000 60%, transparent 105%); }
.tab.on { background: #8fa8d0; border-radius: 8px 8px 0 0; color: #1a2536; }
.tab.on::after { display: none; }
.newtab { width: 40px; }
.tabmenu { width: 16px; height: 16px; margin: 9px 14px 0 auto; border-radius: 8px; background: #2d333c; color: #cdd8ea; }
.toolbar { display: flex; align-items: center; height: 38px; padding: 0 6px; background: #8fa8d0; color: #0a2450; }
.cell { width: 32px; height: 28px; position: relative; flex: none; }
.dim { color: #56709e; }
.omnibox { flex: 1; display: flex; align-items: center; height: 28px; margin: 0 6px; padding: 0 2px 0 10px; border-radius: 14px; background: #adc0de; color: #45536a; }
.omnibox input { flex: 1; margin-left: 8px; min-width: 0; color: #37445a; font-size: 14px; }
.ext { width: 16px; height: 16px; border-radius: 3px; color: #fff; font: bold 12px/15px "Liberation Sans", sans-serif; text-align: center; }
.round { border-radius: 8px; }
.slate { background: #2f4858; }
.red { background: #b22028; }
.redd { background: #d92b2b; }
.abp { background: #f2304b; font-size: 7px; line-height: 16px; }
.blk { background: #080808; font-size: 8px; line-height: 22px; }
.teal { background: #28c3cf; }
.badge { position: absolute; right: 1px; bottom: 0; width: 12px; height: 12px; border-radius: 2px; color: #fff; font: bold 10px/12px "Liberation Sans", sans-serif; }
.grey { background: #555; }
.redb { background: #f0312f; }
.purple { background: #6d3cc0; }
.bookmarks { display: flex; align-items: center; gap: 16px; height: 33px; padding: 0 18px 4px 14px; background: #8fa8d0; border-bottom: 1px solid #6c86b3; color: #17243c; }
.bookmarks a { display: flex; align-items: center; gap: 8px; font-size: 15px; white-space: nowrap; }
.more { margin-left: auto; font-size: 18px; font-weight: bold; }

/* GitHub */
.gh { flex: 1; display: flex; flex-direction: column; font: 14px/20px "Liberation Sans", "Noto Sans CJK SC", sans-serif; color: #24292e; }
.ghbar { display: flex; align-items: center; gap: 16px; height: 62px; padding: 0 32px; background: #24292e; color: #fff; font-weight: bold; }
.ghsearch { display: flex; align-items: center; width: 272px; height: 30px; padding: 0 5px 0 12px; border: 1px solid #4b5157; border-radius: 6px; }
.ghsearch input { flex: 1; min-width: 0; font-weight: normal; }
.ghsearch input::placeholder { color: #c3c6c9; opacity: 1; }
.ghsearch kbd { width: 19px; height: 20px; border: 1px solid #5a6067; border-radius: 3px; font: 12px/18px "Liberation Sans", sans-serif; color: #8a9097; text-align: center; }
.ghright { display: flex; align-items: center; gap: 16px; margin-left: auto; }
.ghright button { gap: 4px; position: relative; }
.ghright .termbtn { gap: 6px; padding-right: 4px; }
.dot::after { content: ""; position: absolute; left: 12px; top: -4px; width: 10px; height: 10px; border-radius: 5px; background: #1684f0; }
.repohead { padding-top: 18px; background: #f6f8fa; border-bottom: 1px solid #d5dae0; }
.reporow { display: flex; align-items: center; gap: 8px; height: 28px; padding: 0 32px; }
h1 { font-size: 20px; color: #0366d6; }
h1 i { font-style: normal; color: #586069; margin: 0 4px; }
.pill { border: 1px solid #d1d5da; border-radius: 10px; padding: 0 8px; font-size: 12px; line-height: 18px; color: #586069; }
.ghbtns { display: flex; gap: 11px; margin-left: auto; font-size: 12px; }
.ghbtns button { gap: 4px; padding: 0 12px; }
.gbtn, .grp { height: 28px; border: 1px solid #d5d8da; border-radius: 6px; background: #fafbfc; }
.grp { display: flex; overflow: hidden; }
.grp a { padding: 0 12px; border-left: 1px solid #d5d8da; background: #fff; font-weight: bold; line-height: 26px; }
.gapl { margin-left: 4px; }
.repotabs { display: flex; height: 48px; margin-top: 17px; padding: 0 32px; }
.repotabs a { display: flex; align-items: center; gap: 6px; padding: 0 16px; }
.repotabs .on { font-weight: bold; box-shadow: inset 0 -2px #f9826c; }
.repobody { display: flex; gap: 32px; width: 100%; max-width: 1280px; margin: 0 auto; padding: 31px 32px 0; }
.repomain { flex: 1; }
.acts { display: flex; justify-content: flex-end; gap: 9px; }
.acts button { height: 32px; gap: 4px; padding: 0 16px; border-radius: 6px; border: 1px solid #d5d8da; background: #fafbfc; }
.acts .green { background: #07a352; border-color: #069248; color: #fff; }
.commit { display: flex; align-items: center; justify-content: flex-end; gap: 16px; height: 54px; margin-top: 16px; padding: 0 16px; border: 1px solid #c8d5e4; border-radius: 6px 6px 0 0; background: #f6f8fa; color: #586069; }
.commit svg { margin-right: -12px; }
.commit b { color: #24292e; }
.about { width: 280px; }
.abouthead { display: flex; justify-content: space-between; align-items: center; height: 24px; }
.about h2 { font-size: 16px; font-weight: bold; }
.about p { margin: 16px 0; font-size: 16px; line-height: 24px; }
.about a { display: flex; gap: 13px; align-items: center; color: #586069; }

.octotree { position: absolute; left: -1px; top: 411px; width: 30px; height: 107px; display: flex; flex-direction: column; align-items: center; gap: 5px; padding-top: 8px; border: 1px solid #d1d9e8; border-radius: 0 6px 6px 0; background: #fff; box-shadow: 0 0 6px #ccd3e0; font: 14px/16px "Liberation Sans", sans-serif; color: #6a6f75; }
.octotree svg { height: 10px; }
.octotree span { writing-mode: vertical-rl; rotate: 180deg; }
.octotree b { font-weight: normal; color: #f5632d; }
.octotree i { width: 12px; height: 6px; margin-top: 6px; border: solid #b5b9bf; border-width: 2px 0; }

/* PicGo */
.picgo { position: absolute; left: 819px; top: 401px; width: 800px; height: 450px; display: flex; flex-direction: column; background: #3f3c37; color: #e8e8e8; box-shadow: 0 2px 12px rgba(0,0,0,.35); font: 12px/20px "Liberation Sans", "Noto Sans CJK SC", sans-serif; }
.picgo header { height: 22px; text-align: center; line-height: 22px; }
.pgctl { position: absolute; right: 6px; top: 3px; display: flex; align-items: center; gap: 7px; }
.pgbody { flex: 1; display: flex; }
.picgo aside { width: 166px; display: flex; flex-direction: column; justify-content: flex-end; padding: 0 0 4px 3px; font-size: 14px; color: #cfcfcf; }
.picgo aside span { padding: 0 0 4px 38px; }
.picgo main { flex: 1; display: flex; flex-direction: column; align-items: center; }
.picgo h2 { display: flex; align-items: center; gap: 10px; margin-top: 20px; font-size: 20px; line-height: 30px; }
.drop { width: 454px; height: 223px; margin-top: 19px; border: 2px dashed #dcdcdc; border-radius: 8px; display: flex; flex-direction: column; align-items: center; padding-top: 63px; font-size: 16px; color: #dcdcdc; }
.cloud { width: 58px; height: 43px; }
.drop p { margin-top: 29px; line-height: 22px; }
.drop a { color: #409eff; }
.pgrow { display: flex; gap: 12px; margin-top: 42px; padding-left: 12px; text-align: center; }
.fmt span, .quick span { display: block; height: 22px; }
.seg { display: flex; border-radius: 14px; overflow: hidden; background: #fff; color: #606266; }
.seg button { height: 28px; padding: 0 14px; border-left: 1px solid #dcdfe6; }
.seg button:last-child { padding: 0 16px; }
.seg .on { background: #409eff; color: #fff; border: 0; }
.qb { display: flex; gap: 6px; }
.qb button { height: 28px; width: 88px; border-radius: 14px; background: #409eff; color: #fff; }
.qb button + button { width: 80px; }

/* file manager */
.nautilus { position: absolute; left: 201px; top: 213px; width: 890px; height: 597px; display: flex; flex-direction: column; border-radius: 8px 8px 0 0; background: #fff; box-shadow: 0 0 0 1px rgba(0,0,0,.3), 0 4px 18px rgba(0,0,0,.55); color: #111; }
.nautilus > header { display: flex; align-items: center; height: 47px; padding: 0 13px 0 7px; gap: 8px; border-radius: 8px 8px 0 0; background: #322f30; border-bottom: 1px solid #1c1a1a; color: #f2f2f2; }
.joined { display: flex; }
.joined button, .hb, .path { width: 35px; height: 33px; border: 1px solid #282626; border-radius: 4px; background: #484641; }
.joined button { border-radius: 4px 0 0 4px; }
.joined button + button { border-radius: 0 4px 4px 0; border-left: 0; }
.joined .off { background: #393735; color: #999; }
.path { width: 151px; gap: 15px; font-size: 15px; }
.nright { display: flex; gap: 7px; margin-left: auto; }
.wctl { display: flex; align-items: center; gap: 24px; margin-left: 16px; }
.wctl button { width: 16px; height: 20px; }
.wctl .close { width: 20px; margin-left: -2px; border-radius: 10px; background: #e95420; color: #fff; }
.nbody { flex: 1; display: flex; }
.places { width: 189px; padding-top: 4px; background: #f6f6f6; border-right: 1px solid #cfcfcf; }
.places a { display: flex; align-items: center; gap: 8px; height: 36px; margin-bottom: 2px; padding-left: 14px; font-size: 15px; }
.places .latin { font-size: 14px; }
.places svg { color: #4a4a4a; }
.places .on { background: #e95420; color: #fff; }
.places .on svg { color: #ffd9c9; }
.places hr { margin: 2px 0 7px; border: 0; border-top: 1px solid #d0d0d0; }
.fgrid { display: grid; grid-template-columns: repeat(7, 99px); grid-auto-rows: 91px; align-content: start; padding: 10px 0 0 4px; }
.fgrid a { text-align: center; font-size: 14px; line-height: 17px; }
.fi { display: block; position: relative; width: 46px; height: 42px; margin: 0 auto 4px; }
.fi svg { width: 46px; height: 42px; }
.fi .em { position: absolute; left: 15px; top: 17px; width: 16px; height: 16px; color: #dedede; }

/* taskbar */
.taskbar { display: flex; height: 48px; background: #1d1d1d; color: #eee; font-size: 14px; }
.grid { width: 64px; }
.app { width: 37px; height: 37px; }
.task { width: 91px; margin: 0 8px; gap: 9px; padding: 3px 0 0 9px; border-bottom: 3px solid #e95420; justify-content: flex-start; }
.task.on { background: #505050; }
.task.t { width: 90px; }
.pins { display: flex; padding: 0 5px; }
.pins button { width: 71px; }
.tray { display: flex; align-items: center; flex: 1; border-right: 1px solid #3a3a3a; margin-right: 8px; padding-right: 15px; }
.trayicons { display: flex; gap: 24px; padding-left: 12px; }
.speed { margin-left: auto; }
.tb { margin-left: 28px; gap: 11px; }
.tb + .tb { gap: 8px; }
time { margin-left: 34px; white-space: nowrap; }
.sys { margin-left: 35px; gap: 11px; }
.two .tray { justify-content: flex-end; }
.two .pins { padding: 0; }
.two .pins button { width: 72px; }
.two .task { width: 224px; }

/* Obsidian */
.obs { flex: 1; display: flex; flex-direction: column; background: #3b4252; color: #d8dee9; font: 14px/20px Inter, "Noto Sans CJK SC", sans-serif; }
.otitle { position: relative; height: 22px; background: #090a0d; text-align: center; font-size: 13px; line-height: 24px; color: #b5b5b0; }
.onav, .owin { position: absolute; top: 6px; display: flex; color: #77777a; }
.onav { left: 41px; gap: 23px; }
.owin { right: 10px; gap: 20px; }
.omain { flex: 1; display: flex; }
.ribbon { width: 30px; background: #434c5e; display: flex; flex-direction: column; align-items: center; gap: 26px; padding-top: 42px; color: #b6bfce; }
.ribbon .chev { margin-bottom: 10px; }
.ribbon.right { background: #3b4252; border-left: 1px solid #434c5e; }
.rbot { margin-top: auto; margin-bottom: 56px; display: flex; flex-direction: column; gap: 26px; }
.oside { width: 299px; display: flex; flex-direction: column; background: #434c5e; }
.otabs { display: flex; height: 30px; padding: 4px 0 0 20px; }
.otabs button { width: 41px; }
.otabs .on { background: #3b4252; border-radius: 6px 6px 0 0; }
.otree { flex: 1; background: #3b4252; border-radius: 6px 0 0 0; }
.otools { display: flex; justify-content: center; gap: 22px; height: 62px; padding-top: 19px; }
h3 { padding-left: 16px; font-size: 16px; line-height: 26px; }
.otree ul { list-style: none; }
.otree li { display: flex; align-items: center; gap: 11px; height: 29px; padding-left: 13px; }
.otree li svg { color: #5e8ab4; }
.otree .open svg { color: #e5e9f0; }
.otree .sub { padding-left: 28px; }
.otree .leaf { padding-left: 32px; }
.otree .sel { background: #434c5e; }
.pane { flex: 1; background: #2e3440; border-left: 1px solid #434c5e; border-top: 1px solid #434c5e; color: #e5e9f0; }
.pane header { display: flex; align-items: center; gap: 15px; height: 35px; padding: 0 19px 0 10px; background: #3b4252; border-bottom: 2px solid #434c5e; color: #c8cfda; }
.pane.active header { background: #2e3440; border-color: #88c0b8; }
.pane h2 { font-size: 17px; font-weight: 600; color: #eceff4; }
.pacts { display: flex; align-items: center; gap: 17px; margin-left: auto; }
.note { padding: 19px 40px; font-size: 17px; line-height: 25px; }
.preview { padding: 36px 50px; }
mark { display: inline-block; background: #4a566a; color: inherit; }
.ostatus { display: flex; justify-content: flex-end; gap: 30px; height: 22px; padding-right: 35px; border-top: 1px solid #434c5e; font-size: 13px; line-height: 22px; }
```
